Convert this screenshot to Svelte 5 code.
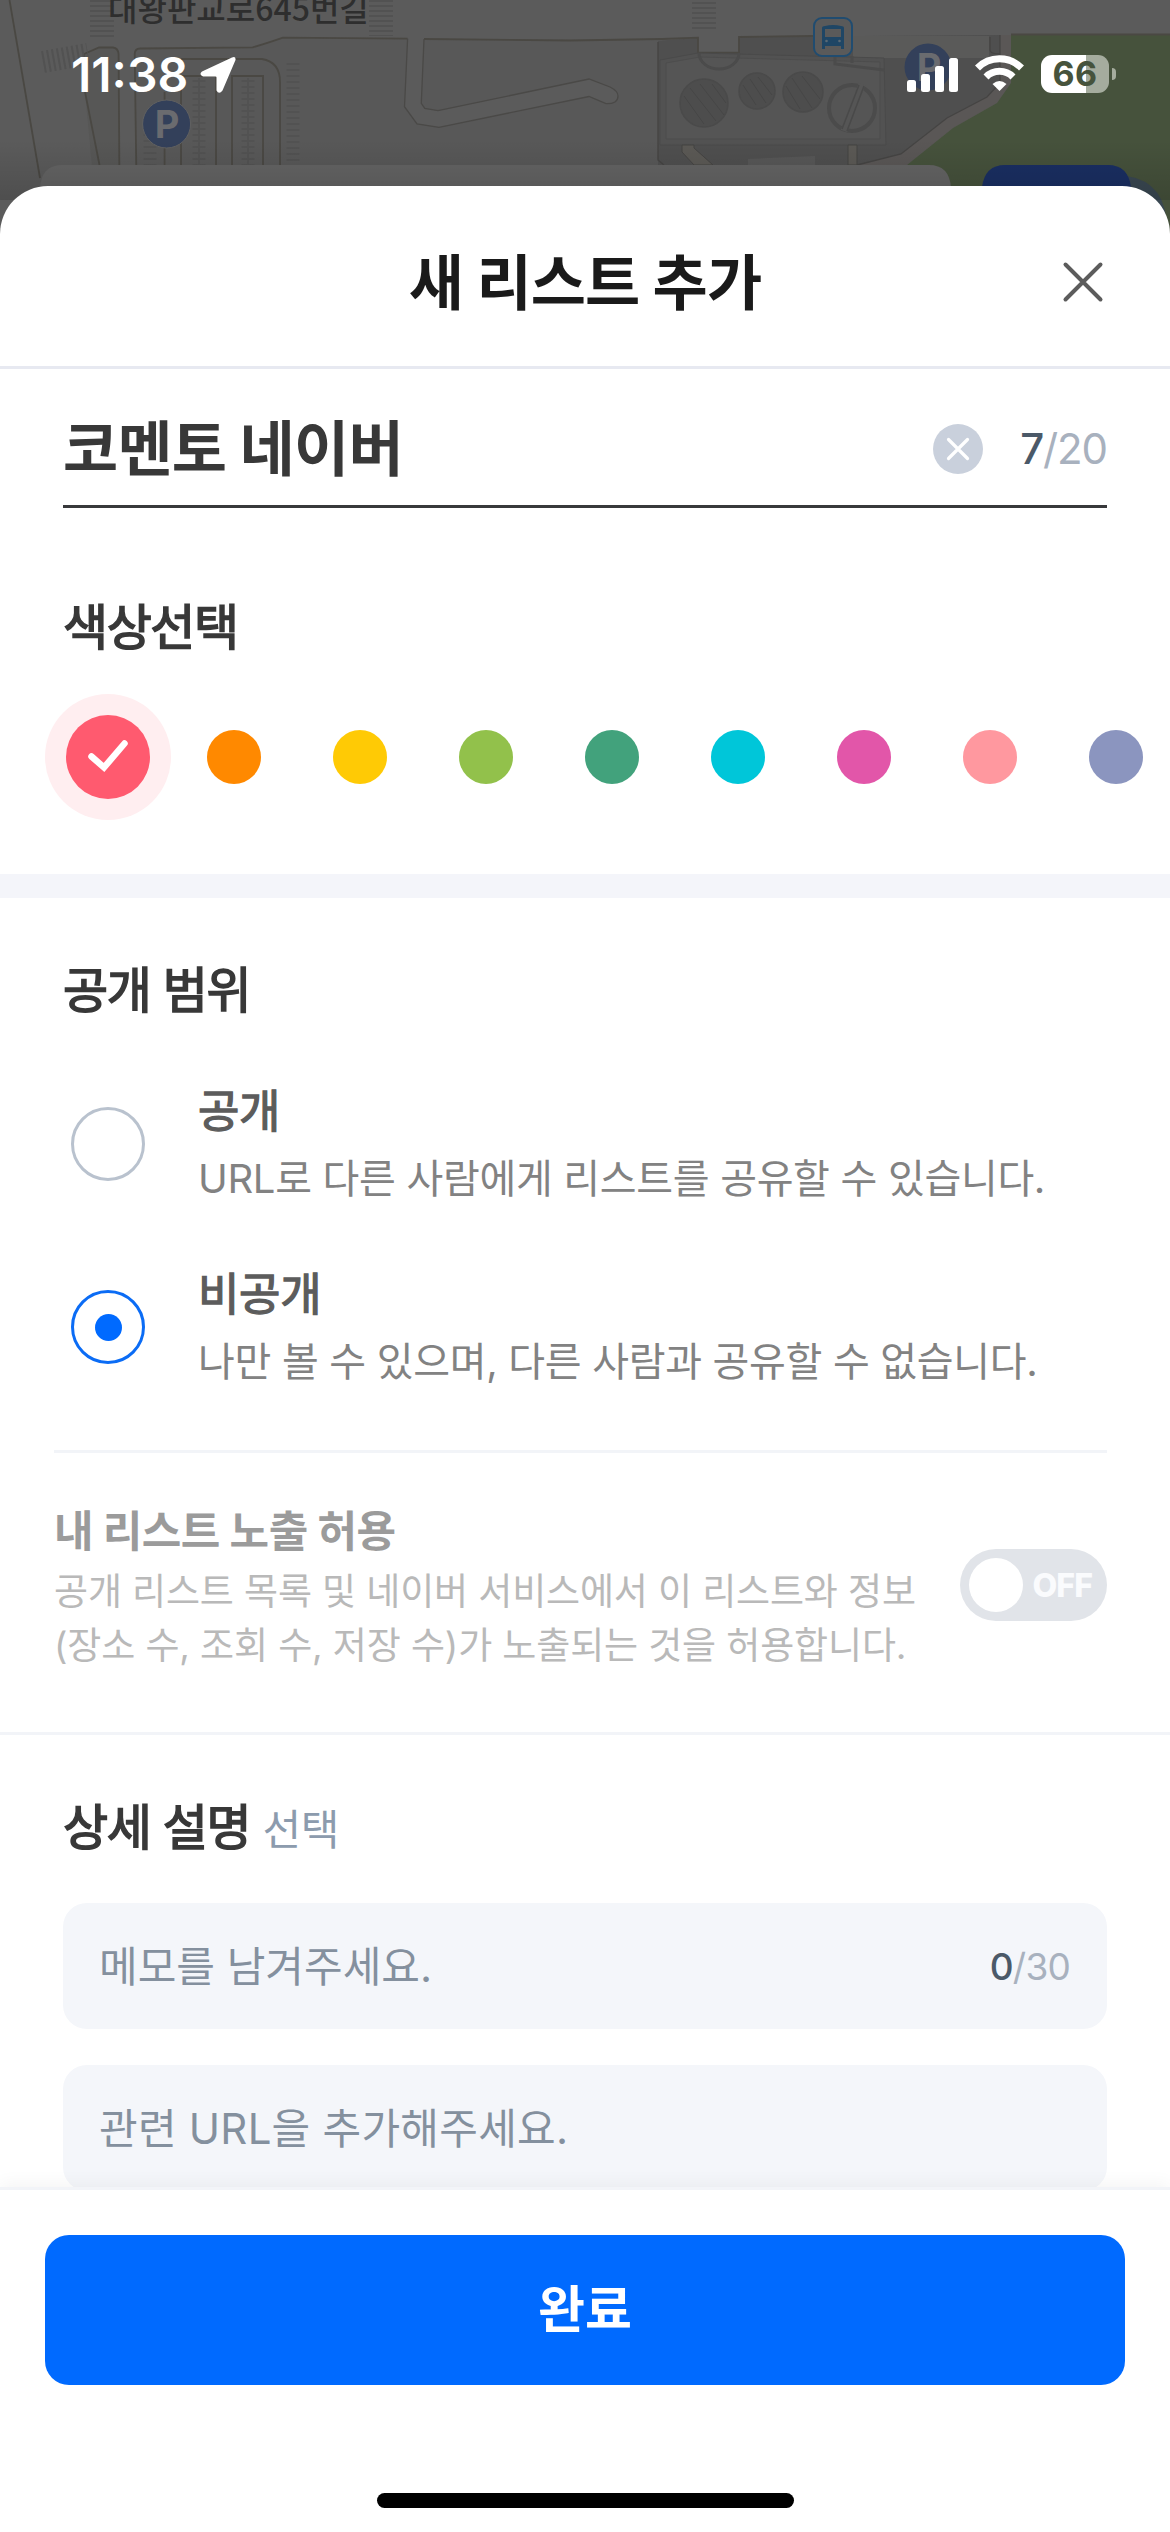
<script>
  const colors = ['#ff5a6f', '#ff8900', '#ffca05', '#92c14b', '#42a27c', '#00c6d9', '#e256a9', '#ff989f', '#8b95bf'];
  const scopes = [
    { id: 'public', label: '공개', desc: 'URL로 다른 사람에게 리스트를 공유할 수 있습니다.' },
    { id: 'private', label: '비공개', desc: '나만 볼 수 있으며, 다른 사람과 공유할 수 없습니다.' }
  ];
  let color = $state(0);
  let scope = $state('private');
</script>

<div class="screen">
  <svg class="map" viewBox="0 0 1170 240" aria-hidden="true">
    <defs>
      <linearGradient id="shade" x1="0" y1="0" x2="0" y2="1">
        <stop offset="0" stop-color="#000" stop-opacity="0" />
        <stop offset="1" stop-color="#000" stop-opacity=".14" />
      </linearGradient>
    </defs>
    <rect width="1170" height="240" fill="#5b5b5b" />
    <path d="M85 92L84 54L99 47.5H113Q118 48 118.600 54L119.500 240H99Z" fill="#575756" />
    <path d="M136.600 240L134.700 54Q135 48.500 140 48.500L252.600 47.300L283 37.700L407.600 38.700L404.500 106.700L417 124L439 127.300L589 96.500L606 103.700Q618 104 618 96Q618 91 610 87L589 79L438 110.700L424.800 108.300L421.300 103.300L424 39L658 40V240Z" fill="#585858" />
    <path d="M658 40.700L698 38V53H739V37L1000 35V83L987 97L947 118L901 154L857 165L850 240H658Z" fill="#4f4f4f" />
    <path d="M853 36H989V58H853Z" fill="#5a5a59" />
    <path d="M1001 35H1011V83L997 103L953 128L907 165H857L901 154L947 118L987 97L1000 83Z" fill="#5a5756" />
    <path d="M1011 34H1170V240H830L907 165L953 128L997 103L1011 83Z" fill="#46523c" />
    <g fill="none" stroke="#4a4843" stroke-width="1.800">
      <path d="M9.500 0L40 178" />
      <path d="M99.500 165L85 92L84 54L99 47.500H113Q118 48 118.600 54L119.500 190" />
      <path d="M136.600 190L134.700 54Q135 48.500 140 48.500L252.600 47.300Q262 45 283 37.700L407.600 38.700" />
      <path d="M424 39L570 40.500L662 39L698 37.700V52.700H739V37L813 36M1011 34.500H1170" />
      <path d="M181 59H262Q280 62 280 82V190M164.600 92V190M181 76V190M216 76V190M232 190V76H263V190M181 76H216" />
    </g>
    <path d="M407.600 38.700L404.500 106.700L417 124L439 127.300L589 96.500L606 103.700Q618 104 618 96Q618 91 610 87L589 79L438 110.700L424.800 108.300L421.300 103.300L424 39" fill="none" stroke="#4a4947" stroke-width="1.300" />
    <path d="M1000 35V83L987 97L947 118L901 154L857 165M658 42V160L664 165M990 37V50Q990 54 1000 54" fill="none" stroke="#454443" stroke-width="1.300" />
    <g stroke="#525252" fill="none">
      <path d="M102 0V38M381 0V36M704 2V29" stroke-width="24" stroke-dasharray="2 3" />
      <path d="M43 62L88 54" stroke-width="22" stroke-dasharray="2 3" />
      <path d="M199 80V165M248 80V165M293 63V165M150 128V165" stroke-width="13" stroke-dasharray="2 4" />
      <path d="M199 78V165M248 78V165" stroke-width="2" />
    </g>
    <path d="M660 60L698 53L884 58L886 145H660Z" fill="#525252" stroke="#4a4a4a" />
    <path d="M666 63L700 57L880 62V139H666Z" fill="#555" stroke="#4d4d4d" />
    <path d="M699 53A20 16 0 0 0 739 53M835 56V64L884 70M852 56V63" fill="none" stroke="#4b4b4b" stroke-width="3" />
    <g fill="#4d4d4d" stroke="#4a4a4a" stroke-width="1.500">
      <circle cx="704" cy="103" r="24" /><circle cx="757" cy="91" r="18" /><circle cx="803" cy="92" r="20" />
    </g>
    <g stroke="#464646" stroke-width="1">
      <path d="M684 96L704 124M690 88L716 121M700 84L724 115M712 84L726 103M743 85L756 105M750 79L766 103M758 77L772 95M786 86L800 109M792 78L812 108M802 76L820 99" />
    </g>
    <circle cx="852" cy="108" r="23" fill="none" stroke="#4b4b4b" stroke-width="4" />
    <path d="M844 131L862 84" stroke="#555" stroke-width="7" /><path d="M842 129L859 85M847 131L864 86" stroke="#494949" stroke-width="1.500" />
    <path d="M682 145V152L694 165H713L694 148V145ZM848 145H857V165H848Z" fill="#5b5955" stroke="#454443" />
    <path d="M748 159L815 156V165H748Z" fill="#575757" />

    <text x="108" y="20.500" class="road">대왕판교로645번길</text>
    <circle cx="166.600" cy="124" r="24" fill="#33405a" stroke="#616161" stroke-width="1" />
    <text x="167" y="138" class="parking">P</text>
    <circle cx="928" cy="67" r="23.500" fill="#33405a" />
    <text x="929" y="81" class="parking">P</text>
    <rect x="814" y="18" width="38" height="38" rx="8" fill="#5a5a5a" stroke="#204c70" stroke-width="2" />
    <path fill-rule="evenodd" d="M822 28Q822 26 825 26Q833 24 841 26Q844 26 844 28V49H841V46H825V49H822ZM825 29V37H841V29Z" fill="#1f4665" />
    <circle cx="826.500" cy="41" r="1.300" fill="#5a6a75" /><circle cx="839.500" cy="41" r="1.300" fill="#5a6a75" />

    <path d="M1060 240V176H1127Q1167 182 1167 230V240Z" fill="#3a4852" />
    <path d="M40 240V187Q42 165 62 165H929Q949 165 951 187V240Z" fill="#646464" />
    <path d="M982 240V187Q985 165 1005 165H1108Q1128 165 1131 187V240Z" fill="#1a2f63" />
    <rect y="140" width="1170" height="60" fill="url(#shade)" />
  </svg>

  <header class="status">
    <div class="clock">
      <span class="time">11:38</span>
      <svg width="38" height="38" viewBox="0 0 38 38"><path d="M33 1.500Q37 0 36.500 4L23.500 34.500Q20 39 17.500 34.500V21.500Q17.500 20.500 16.500 20.500H4Q-.5 18.500 3 15.500Z" fill="#fff" /></svg>
    </div>
    <div class="signals">
      <svg width="52" height="34" viewBox="0 0 52 34" fill="#fff"><rect y="22" width="9" height="12" rx="2.500" /><rect x="14" y="16" width="9" height="18" rx="2.500" /><rect x="28" y="8" width="9" height="26" rx="2.500" /><rect x="42" width="9" height="34" rx="2.500" /></svg>
      <svg class="wifi" width="49" height="36" viewBox="0 0 49 36" fill="none" stroke="#fff" stroke-width="7"><path d="M2.500 13A31 31 0 0 1 46.500 13" /><path d="M11 22A19 19 0 0 1 38 22" /><path d="M17.500 29Q24.500 23 31.500 29L24.500 36Z" fill="#fff" stroke="none" /></svg>
      <div class="battery"><span class="level">66</span><i class="nub"></i></div>
    </div>
  </header>

  <main class="sheet">
    <header class="titlebar">
      <h1>새 리스트 추가</h1>
      <svg class="close" width="42" height="42" viewBox="0 0 42 42"><path d="M3.500 3.500L38.500 38.500M38.500 3.500L3.500 38.500" stroke="#5c5c5c" stroke-width="4" stroke-linecap="round" /></svg>
    </header>

    <div class="content">
      <section class="basic">
        <div class="name">
          <span class="value">코멘토 네이버</span>
          <svg class="clear" width="50" height="50" viewBox="0 0 50 50"><circle cx="25" cy="25" r="25" fill="#c9d0dc" /><path d="M15.500 15.500L34.500 34.500M34.500 15.500L15.500 34.500" stroke="#fff" stroke-width="3.200" stroke-linecap="round" /></svg>
          <span class="count"><b>7</b>/20</span>
        </div>
        <h2>색상선택</h2>
      </section>
      <div class="palette">
        {#each colors as c, i}
          <div class="swatch" class:selected={i === color} style:--c={c}>
            <span class="dot">
              {#if i === color}
                <svg width="44" height="36" viewBox="0 0 44 36"><path d="M5.500 17.500L18 28.500L38.500 4.500" fill="none" stroke="#fff" stroke-width="6.500" stroke-linecap="round" /></svg>
              {/if}
            </span>
          </div>
        {/each}
      </div>

      <section class="scope">
        <h2>공개 범위</h2>
        <div class="options">
          {#each scopes as s}
            <div class="option">
              <span class="radio" class:on={s.id === scope}></span>
              <div class="texts"><strong>{s.label}</strong><p>{s.desc}</p></div>
            </div>
          {/each}
        </div>
      </section>

      <section class="expose">
        <div class="row">
          <div>
            <h3>내 리스트 노출 허용</h3>
            <p>공개 리스트 목록 및 네이버 서비스에서 이 리스트와 정보<br />(장소 수, 조회 수, 저장 수)가 노출되는 것을 허용합니다.</p>
          </div>
          <div class="toggle"><i></i><span>OFF</span></div>
        </div>
      </section>

      <section class="detail">
        <h2>상세 설명 <small>선택</small></h2>
        <div class="field"><span>메모를 남겨주세요.</span><span class="count"><b>0</b>/30</span></div>
        <div class="field"><span class="wide">관련 URL을 추가해주세요.</span></div>
      </section>
    </div>

    <footer>
      <button>완료</button>
      <div class="home"></div>
    </footer>
  </main>
</div>

<style>
  :global(body) { margin: 0; background: #5b5b5b; }
  .screen {
    position: relative;
    width: 1170px;
    height: 2532px;
    overflow: hidden;
    display: flex;
    flex-direction: column;
    font-family: Inter, 'Noto Sans CJK KR', sans-serif;
    color: #333;
  }
  h1, h2, h3, p { margin: 0; }
  h1, h3 { font-weight: 700; }
  svg { display: block; flex: none; }

  .map { position: absolute; left: 0; top: 0; width: 1170px; height: 240px; }
  .road { font: 500 32px 'Noto Sans CJK KR', sans-serif; fill: #2e2e2e; }
  .parking { font: 700 38px Inter, sans-serif; fill: #6a6b6f; text-anchor: middle; }

  .status {
    position: relative;
    box-sizing: border-box;
    height: 186px;
    flex: none;
    padding: 45px 54px 0 71px;
    display: flex;
    justify-content: space-between;
    align-items: flex-start;
  }
  .clock, .signals { display: flex; align-items: center; height: 60px; }
  .time { color: #fff; font-size: 48px; font-weight: 600; line-height: 60px; width: 128px; }
  .wifi { margin: 0 17px 4px 16px; }
  .battery {
    position: relative;
    width: 68px;
    height: 38px;
    margin: 0 7px 2px 0;
    border-radius: 11px;
    background: linear-gradient(90deg, #fff 45px, #a5ac9e 45px);
    display: flex;
    align-items: center;
    justify-content: center;
  }
  .level { font-size: 34px; font-weight: 700; line-height: 38px; letter-spacing: 0.4px; color: #46533c; }
  .nub { position: absolute; left: 71px; top: 13px; width: 4px; height: 12px; border-radius: 0 4px 4px 0; background: #a5ac9e; }

  .sheet {
    position: relative;
    flex: 1;
    min-height: 0;
    display: flex;
    flex-direction: column;
    background: #fff;
    border-radius: 48px 48px 0 0;
    overflow: hidden;
  }
  .titlebar {
    box-sizing: border-box;
    height: 183px;
    flex: none;
    padding: 12px 66px 0;
    border-bottom: 3px solid #e7e9f1;
    display: grid;
    grid-template-columns: 42px 1fr 42px;
    align-items: center;
  }
  .titlebar h1 { grid-column: 2; text-align: center; font-size: 60px; line-height: 72px; color: #1a1a1a; letter-spacing: -0.9px; padding-top: 2px; }

  .content { flex: 1; min-height: 0; overflow: hidden; }
  .basic { padding: 0 63px; }
  .name {
    box-sizing: border-box;
    height: 139px;
    padding-top: 24px;
    border-bottom: 3px solid #38393b;
    display: flex;
    align-items: center;
  }
  .value { flex: 1; font-size: 60px; line-height: 72px; font-weight: 700; letter-spacing: -0.8px; color: #383838; }
  .clear { margin-right: 37px; }
  .count { color: #a8b1be; font-size: 42px; line-height: 54px; letter-spacing: -1.1px; }
  .count b { font-weight: 500; color: #4b5968; }
  /* Regular outlines thickened by a stroke give a semibold Hangul weight. */
  h2 { font-size: 49px; font-weight: 400; -webkit-text-stroke: 1.6px currentColor; line-height: 60px; letter-spacing: -1.4px; color: #383838; }
  .basic h2 { margin-top: 90px; }

  .palette { display: flex; padding: 36px 0 54px 45px; border-bottom: 24px solid #f4f5fa; overflow: hidden; }
  .swatch { flex: none; width: 126px; height: 126px; border-radius: 50%; display: grid; place-items: center; }
  .dot { width: 54px; height: 54px; border-radius: 50%; background: var(--c); display: grid; place-items: center; }
  .selected { background: #ffeef0; }
  .selected .dot { width: 84px; height: 84px; }

  .scope { padding: 63px 63px 55px; }
  .options { display: flex; flex-direction: column; gap: 49px; margin-top: 57px; }
  .option { display: flex; align-items: center; padding-left: 8px; gap: 53px; }
  .radio { box-sizing: border-box; width: 74px; height: 74px; margin-bottom: 2px; border: 3px solid #b9c2ce; border-radius: 50%; display: grid; place-items: center; }
  .radio.on { border-color: #0b6cf5; }
  .radio.on::after { content: ''; width: 27px; height: 27px; border-radius: 50%; background: #006aff; }
  .texts { line-height: 67px; white-space: nowrap; }
  .texts strong { display: block; font-size: 45px; font-weight: 400; -webkit-text-stroke: 1.3px currentColor; letter-spacing: -0.3px; color: #5c5c5c; }
  .texts p { font-size: 40px; letter-spacing: -0.32px; color: #828282; }

  .expose { border-bottom: 3px solid #f2f4f8; padding-left: 54px; padding-right: 63px; }
  .row { border-top: 3px solid #f2f4f8; padding: 48px 0 59px; display: flex; justify-content: space-between; align-items: center; }
  .expose h3 { font-size: 43px; line-height: 60px; color: #9b9b9b; letter-spacing: -0.5px; margin-bottom: 4px; }
  .expose p { font-size: 37px; line-height: 54px; color: #b9b9b9; letter-spacing: -0.14px; white-space: nowrap; }
  .toggle { box-sizing: border-box; width: 147px; height: 72px; margin-bottom: 4px; border-radius: 36px; background: #e1e4e9; padding: 0 15px 0 9px; display: flex; align-items: center; justify-content: space-between; }
  .toggle i { width: 54px; height: 54px; border-radius: 50%; background: #fff; }
  .toggle span { font-size: 32px; font-weight: 800; color: #fafbfd; letter-spacing: -0.9px; }

  .detail { padding: 63px 63px 0; }
  .detail h2 { height: 60px; margin-bottom: 45px; }
  .detail small { font-size: 42px; line-height: 1; letter-spacing: -0.3px; -webkit-text-stroke: 0; color: #8c9bad; }
  .field {
    box-sizing: border-box;
    height: 126px;
    margin-bottom: 36px;
    padding: 2px 37px 0 36px;
    border-radius: 24px;
    background: #f4f6fa;
    display: flex;
    align-items: center;
    justify-content: space-between;
    font-size: 42px;
    line-height: 54px;
    color: #84909e;
  }
  .field .wide { letter-spacing: 0.25px; }
  .field .count { font-size: 37px; letter-spacing: -0.8px; }

  footer {
    position: relative;
    box-sizing: border-box;
    height: 345px;
    flex: none;
    padding: 45px 45px 0;
    border-top: 3px solid #f2f4f8;
    background: #fff;
    box-shadow: 0 -4px 16px rgba(0, 0, 0, 0.045);
    display: flex;
    flex-direction: column;
    align-items: center;
  }
  button { width: 100%; height: 150px; flex: none; border: 0; padding: 0; border-radius: 24px; background: #006aff; color: #fff; font: 700 51px/60px Inter, 'Noto Sans CJK KR', sans-serif; }
  .home { width: 417px; height: 15px; margin-top: 108px; border-radius: 8px; background: #000; }
</style>
